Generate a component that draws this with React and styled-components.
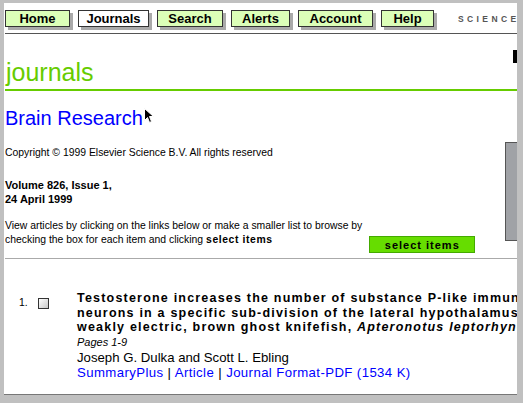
import React from 'react';
import styled, { createGlobalStyle } from "styled-components"

const GlobalStyle = createGlobalStyle`
    html, body {
        margin: 0;
        padding: 0;
        background: #c0c0c0;
    }
    body {
        font-family: "Liberation Sans", Arial, sans-serif;
        color: #000;
    }
`

const navItems = [
    { label: "Home", width: 65 },
    { label: "Journals", width: 71, active: true },
    { label: "Search", width: 66 },
    { label: "Alerts", width: 59 },
    { label: "Account", width: 75 },
    { label: "Help", width: 53 },
]

function Cursor() {
    return (
        <CursorIcon width="11" height="16" viewBox="0 0 11 16">
            <path d="M0.5 0.5 L0.5 12.5 L3.5 9.5 L5.5 14.5 L7.5 13.5 L5.5 8.5 L9.5 8.5 Z" fill="#000" stroke="#fff" strokeWidth="1" />
        </CursorIcon>
    )
}

function App() {
    return (<>
        <GlobalStyle />
        <Window>
            <Page>
                <NavBar>
                    {navItems.map(item => (
                        <NavButton key={item.label} $width={item.width} $active={item.active}>{item.label}</NavButton>
                    ))}
                    <Brand>SCIENCE DIRECT</Brand>
                </NavBar>
                <NavRule />
                <HeaderRow>
                    <Heading>journals</Heading>
                    <Corner />
                </HeaderRow>
                <GreenRule />
                <Intro>
                    <IntroMain>
                        <JournalTitle>Brain Research<Cursor /></JournalTitle>
                        <Small>Copyright © 1999 Elsevier Science B.V. All rights reserved</Small>
                        <Issue>Volume 826, Issue 1,<br />24 April 1999</Issue>
                        <SelectRow>
                            <Small $top={13}>
                                View articles by clicking on the links below or make a smaller list to browse by<br />
                                checking the box for each item and clicking <b>select items</b>
                            </Small>
                            <SelectButton>select items</SelectButton>
                        </SelectRow>
                    </IntroMain>
                    <Cover />
                </Intro>
                <Separator />
                <Article>
                    <Num>1.</Num>
                    <Check />
                    <Details>
                        <ArticleTitle>
                            Testosterone increases the number of substance P-like immunoreactive<br />
                            neurons in a specific sub-division of the lateral hypothalamus of the<br />
                            weakly electric, brown ghost knifefish, <i>Apteronotus leptorhynchus</i>
                        </ArticleTitle>
                        <Pages>Pages 1-9</Pages>
                        <Authors>Joseph G. Dulka and Scott L. Ebling</Authors>
                        <Links>
                            <a href="#s">SummaryPlus</a> | <a href="#a">Article</a> | <a href="#p">Journal Format-PDF (1534 K)</a>
                        </Links>
                    </Details>
                </Article>
            </Page>
        </Window>
    </>)
}

const Window = styled.div`
    width: 523px;
    height: 403px;
    padding: 3px 6px 0 4px;
    box-sizing: border-box;
    overflow: hidden;
`

const Page = styled.div`
    background: #fff;
    height: 391px;
    border-bottom: 1px solid #777;
    overflow: hidden;
    padding-left: 1px;
`

const NavBar = styled.div`
    display: flex;
    align-items: center;
    gap: 8px;
    padding-top: 7px;
    white-space: nowrap;
`

const NavButton = styled.div`
    width: ${p => p.$width}px;
    height: 17px;
    box-sizing: border-box;
    flex: none;
    display: flex;
    align-items: center;
    justify-content: center;
    background: ${p => p.$active ? "#fff" : "#dcffb8"};
    border: 1px solid #333;
    box-shadow: 3px 3px 0 #aaa;
    font-size: 13px;
    font-weight: bold;
`

const Brand = styled.div`
    margin-left: 16px;
    font-size: 8.5px;
    font-weight: bold;
    letter-spacing: 3.4px;
    color: #555;
`

const NavRule = styled.div`
    height: 1px;
    background: #555;
    margin-top: 6px;
`

const HeaderRow = styled.div`
    display: flex;
    justify-content: space-between;
    align-items: flex-start;
`

const Heading = styled.h1`
    margin: 23px 0 0 1px;
    font-size: 25px;
    line-height: 30px;
    font-weight: normal;
    color: #66cc00;
`

const Corner = styled.div`
    width: 4px;
    height: 13px;
    margin-top: 16px;
    background: #000;
`

const GreenRule = styled.div`
    height: 2px;
    background: #66cc00;
    margin-top: 2px;
`

const Intro = styled.div`
    display: flex;
    align-items: flex-start;
`

const IntroMain = styled.div`
    flex: 1;
`

const JournalTitle = styled.h2`
    margin: 15px 0 0;
    display: flex;
    align-items: flex-start;
    font-size: 20px;
    line-height: 24px;
    font-weight: normal;
    color: #0000ff;
`

const CursorIcon = styled.svg`
    margin: 2px 0 0 1px;
`

const Small = styled.div`
    margin-top: ${p => p.$top ?? 16}px;
    font-size: 10.4px;
    line-height: 14px;
    white-space: nowrap;

    b {
        letter-spacing: 0.6px;
    }
`

const Issue = styled.div`
    margin-top: 18px;
    font-size: 11px;
    line-height: 14px;
    font-weight: bold;
`

const SelectRow = styled.div`
    display: flex;
    align-items: flex-end;
    gap: 7px;
`

const SelectButton = styled.div`
    width: 106px;
    height: 17px;
    box-sizing: border-box;
    margin-bottom: -6px;
    display: flex;
    align-items: center;
    justify-content: center;
    background: #66dd00;
    border: 1px solid #44aa00;
    font-size: 11px;
    font-weight: bold;
    letter-spacing: 1px;
`

const Cover = styled.div`
    width: 11px;
    height: 97px;
    margin-top: 51px;
    background: #a0a2a6;
    border: 1px solid #555;
    border-right: none;
`

const Separator = styled.div`
    height: 1px;
    background: #aaa;
    margin-top: 11px;
`

const Article = styled.div`
    display: flex;
    align-items: flex-start;
    margin-top: 32px;
    padding-left: 14px;
`

const Num = styled.div`
    width: 19px;
    flex: none;
    font-size: 10.4px;
    line-height: 14px;
    margin-top: 5px;
`

const Check = styled.div`
    width: 11px;
    height: 11px;
    box-sizing: border-box;
    flex: none;
    margin-top: 7px;
    border: 1px solid #333;
    background: linear-gradient(135deg, #fff, #c8c8c8);
`

const Details = styled.div`
    margin-left: 28px;
    white-space: nowrap;
`

const ArticleTitle = styled.div`
    font-size: 12.5px;
    line-height: 14.5px;
    font-weight: bold;
    letter-spacing: 1.2px;
`

const Pages = styled.div`
    font-size: 11px;
    line-height: 15px;
    font-style: italic;
`

const Authors = styled.div`
    font-size: 13.2px;
    line-height: 15px;
`

const Links = styled.div`
    font-size: 13.2px;
    line-height: 15px;
    letter-spacing: 0.4px;

    a {
        color: #0000ff;
        text-decoration: none;
    }
`

export default App
